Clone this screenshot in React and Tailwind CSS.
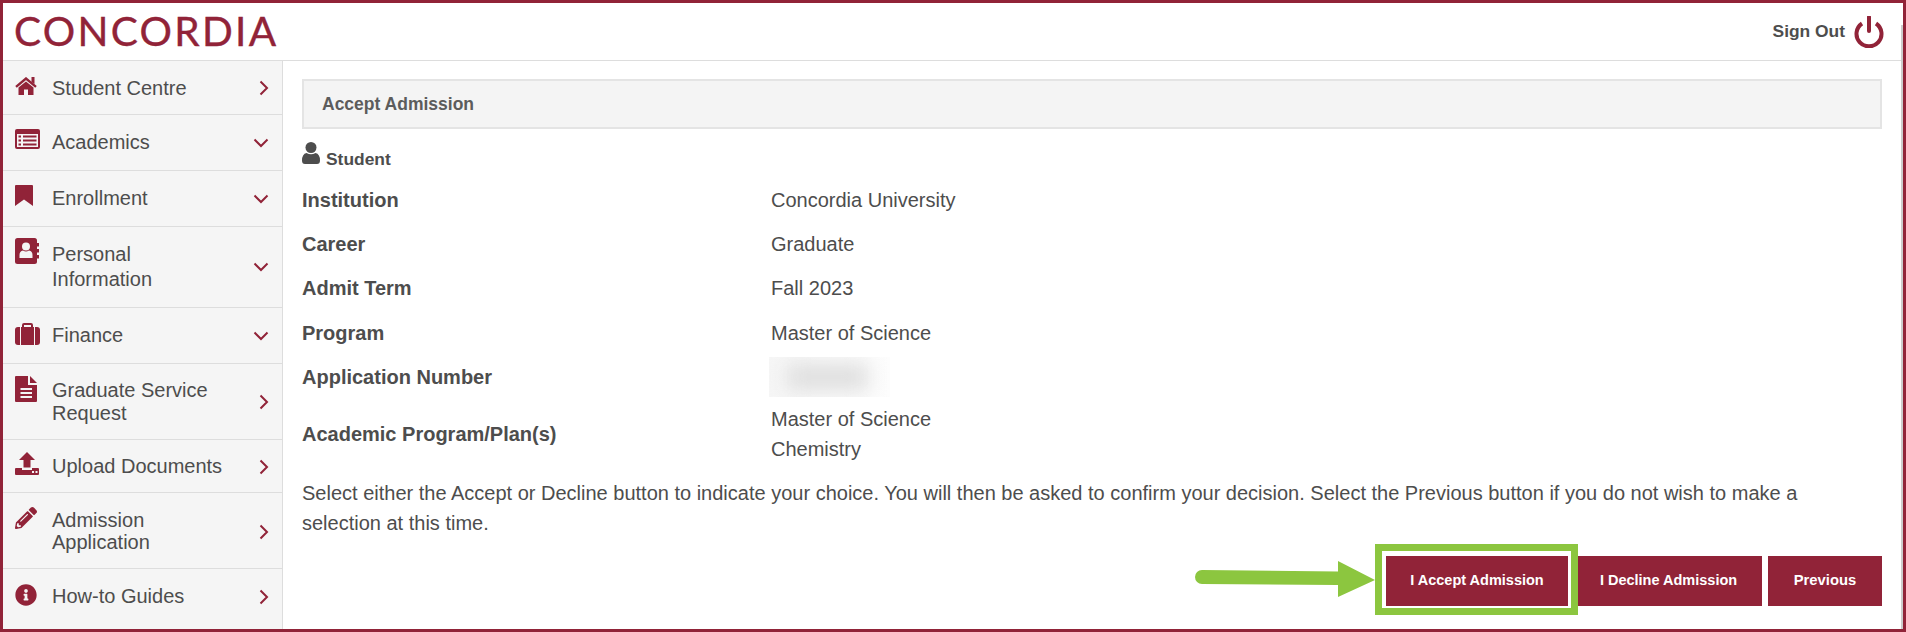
import React from "react";
import { FaPencilAlt, FaInfoCircle } from "react-icons/fa";

const M = "#912338";
const L = "#f5f5f5";

const Right = ({ cls }) => (
  <svg width="10" height="16" viewBox="0 0 10 16" className={`shrink-0 mr-[13px] ml-[6px] ${cls}`}>
    <polyline points="1.5,1.5 8,8 1.5,14.5" fill="none" stroke={M} strokeWidth="2" />
  </svg>
);
const Down = () => (
  <svg width="16" height="10" viewBox="0 0 16 10" className="shrink-0 mr-[13px]">
    <polyline points="1.5,1.5 8,8 14.5,1.5" fill="none" stroke={M} strokeWidth="2" />
  </svg>
);

const Home = () => (
  <svg width="22" height="18" viewBox="0 0 22 18">
    <path d="M16.5 0 H19.5 V7 L16.5 5 Z" fill={M} />
    <path d="M1 9.8 L11 1.5 L21 9.8" fill="none" stroke={M} strokeWidth="2.4" />
    <path d="M3.5 10.5 L11 4.6 L18.5 10.5 V18 H13 V12.5 H9 V18 H3.5 Z" fill={M} />
  </svg>
);
const ListAlt = () => (
  <svg width="25" height="20" viewBox="0 0 25 20">
    <rect width="25" height="20" rx="2" fill={M} />
    <rect x="2" y="5" width="21" height="13" fill={L} />
    <path d="M3.5 6.5 H6 V8.5 H3.5 Z M3.5 10.5 H6 V12.5 H3.5 Z M3.5 14.5 H6 V16.5 H3.5 Z M8 6.5 H21.5 V8.5 H8 Z M8 10.5 H21.5 V12.5 H8 Z M8 14.5 H21.5 V16.5 H8 Z" fill={M} />
  </svg>
);
const Bookmark = () => (
  <svg width="18" height="22" viewBox="0 0 18 22">
    <path d="M1 0 H17 A1 1 0 0 1 18 1 V21 L9 14.5 L0 21 V1 A1 1 0 0 1 1 0 Z" fill={M} />
  </svg>
);
const AddressBook = () => (
  <svg width="24" height="26" viewBox="0 0 24 26">
    <rect width="22" height="26" rx="2.5" fill={M} />
    <path d="M22 5 H24 V8.5 H22 Z M22 11 H24 V14.5 H22 Z M22 17 H24 V20.5 H22 Z" fill={M} />
    <circle cx="11" cy="8.5" r="4" fill={L} />
    <path d="M4.5 20 V17 Q4.5 13 8 12.5 Q11 14.5 14 12.5 Q17.5 13 17.5 17 V20 Z" fill={L} />
  </svg>
);
const Suitcase = () => (
  <svg width="25" height="22" viewBox="0 0 25 22">
    <path d="M8 5 V2 Q8 1 9 1 H16 Q17 1 17 2 V5" fill="none" stroke={M} strokeWidth="2" />
    <rect y="4" width="25" height="18" rx="3" fill={M} />
    <rect x="5" y="4" width="1" height="18" fill={L} />
    <rect x="19" y="4" width="1" height="18" fill={L} />
  </svg>
);
const FileText = () => (
  <svg width="22" height="26" viewBox="0 0 22 26">
    <path d="M1 0 H13 V9 H22 V25 A1 1 0 0 1 21 26 H1 A1 1 0 0 1 0 25 V1 A1 1 0 0 1 1 0 Z" fill={M} />
    <path d="M15 0 L22 7 H15 Z" fill={M} />
    <path d="M5.5 12 H17 V14 H5.5 Z M5.5 16 H17 V18 H5.5 Z M5.5 20 H17 V22 H5.5 Z" fill={L} />
  </svg>
);
const Upload = () => (
  <svg width="24" height="23" viewBox="0 0 24 23">
    <path d="M12 0 L20 8 H15.5 V15.5 H8.5 V8 H4 Z" fill={M} />
    <path d="M1 16 H7 V18 H17 V16 H23 Q24 16 24 17 V22 Q24 23 23 23 H1 Q0 23 0 22 V17 Q0 16 1 16 Z" fill={M} />
    <rect x="17" y="19" width="2" height="2" fill={L} />
    <rect x="20.5" y="19" width="2" height="2" fill={L} />
  </svg>
);
const User = () => (
  <svg width="18" height="22" viewBox="0 0 18 22" className="shrink-0">
    <circle cx="9" cy="5.5" r="5.5" fill="#4d4d4d" />
    <path d="M0 18.5 Q0 12 4.5 11 Q9 13.5 13.5 11 Q18 12 18 18.5 Q18 22 15 22 H3 Q0 22 0 18.5 Z" fill="#4d4d4d" />
  </svg>
);

const nav = [
  { icon: <Home />, top: "mt-[16px]", h: "h-[54px]", label: <>Student Centre</>, chev: "r" },
  { icon: <ListAlt />, top: "mt-[14px]", h: "h-[56px]", text: "pb-[2px]", label: <>Academics</>, chev: "d" },
  { icon: <Bookmark />, top: "mt-[14px]", h: "h-[56px]", text: "pb-[2px]", label: <>Enrollment</>, chev: "d" },
  { icon: <AddressBook />, top: "mt-[11px]", h: "h-[81px]", label: <span className="block leading-[25px]">Personal<br />Information</span>, chev: "d" },
  { icon: <Suitcase />, top: "mt-[15px]", h: "h-[56px]", text: "pb-[2px]", label: <>Finance</>, chev: "d" },
  { icon: <FileText />, top: "mt-[12px]", h: "h-[76px]", label: <span className="block leading-[23px]">Graduate Service<br />Request</span>, chev: "r" },
  { icon: <Upload />, top: "mt-[12px]", h: "h-[53px]", label: <>Upload Documents</>, chev: "r", chevCls: "mt-[2px]" },
  { icon: <FaPencilAlt className="w-[22px] h-[22px]" />, top: "mt-[14px]", h: "h-[76px]", label: <span className="block leading-[22px]">Admission<br />Application</span>, chev: "r", chevCls: "mt-[2px]" },
  { icon: <FaInfoCircle className="w-[22px] h-[22px]" />, top: "mt-[15px]", h: "h-[61px]", text: "pb-[8px]", label: <>How-to Guides</>, chev: "r", chevCls: "mb-[5px]", last: true },
];

const rows = [
  ["Institution", "Concordia University", "pt-[1px]"],
  ["Career", "Graduate", ""],
  ["Admit Term", "Fall 2023", ""],
  ["Program", "Master of Science", "pt-[1px]"],
];

export default function App() {
  return (
    <div className="relative w-[1906px] h-[632px] overflow-hidden border-[3px] border-[#912338] bg-white flex flex-col text-[#4d4d4d] font-['Liberation_Sans',Arial,sans-serif]">
      <header className="h-[58px] shrink-0 border-b border-[#dddddd] flex items-center justify-between pl-[11px] pr-[19px]">
        <span className="font-['Lato',sans-serif] text-[40.5px] leading-none tracking-[2.3px] text-[#912338] [-webkit-text-stroke:0.4px_#912338]">CONCORDIA</span>
        <div className="flex items-center gap-[9px]">
          <span className="font-bold text-[17.4px]">Sign Out</span>
          <svg width="30" height="32" viewBox="0 0 30 32">
            <path d="M8 7.5 A12.5 12.5 0 1 0 22 7.5" fill="none" stroke="#912338" strokeWidth="4" />
            <line x1="15" y1="1" x2="15" y2="15" stroke="#912338" strokeWidth="4" strokeLinecap="round" />
          </svg>
        </div>
      </header>
      <div className="flex flex-1 min-h-0">
        <nav className="w-[280px] shrink-0 bg-[#f5f5f5] border-r border-[#dddddd] text-[20px]">
          {nav.map((n, i) => (
            <div key={i} className={`flex pl-[12px] ${n.h} ${n.last ? "" : "border-b border-[#dddddd]"}`}>
              <div className={`w-[37px] shrink-0 text-[#912338] ${n.top}`}>{n.icon}</div>
              <div className={`flex-1 self-center ${n.text || ""}`}>{n.label}</div>
              <div className="self-center">{n.chev === "r" ? <Right cls={n.chevCls || ""} /> : <Down />}</div>
            </div>
          ))}
        </nav>
        <main className="flex-1 min-w-0 pl-[19px] pr-[21px] pt-[18px]">
          <div className="h-[50px] border-2 border-[#e4e4e4] bg-[#f4f4f4] flex items-center pl-[18px] font-bold text-[17.5px] text-[#5c5c5c]">Accept Admission</div>
          <div className="h-[48px] flex items-start pt-[13px] gap-[6px] font-bold text-[17.4px]">
            <User />
            <span className="mt-[4px]">Student</span>
          </div>
          {rows.map(([a, b, c]) => (
            <div key={a} className={`grid grid-cols-[469px_1fr] h-[44.4px] items-center text-[20px] ${c}`}>
              <div className="font-bold">{a}</div>
              <div>{b}</div>
            </div>
          ))}
          <div className="grid grid-cols-[467px_1fr] h-[44.4px] items-center text-[20px]">
            <div className="font-bold">Application Number</div>
            <div className="relative w-[121px] h-[40px] overflow-hidden bg-gradient-to-r from-[#f6f6f6] to-[#fdfdfd]">
              <div className="absolute left-[18px] right-[22px] top-[7px] bottom-[7px] bg-[#dedede] blur-[10px]" />
            </div>
          </div>
          <div className="grid grid-cols-[469px_1fr] h-[66px] pt-[5px] items-center text-[20px]">
            <div className="font-bold">Academic Program/Plan(s)</div>
            <div className="leading-[30px]">Master of Science<br />Chemistry</div>
          </div>
          <p className="mt-[13px] text-[20px] leading-[30px]">
            Select either the Accept or Decline button to indicate your choice. You will then be asked to confirm your decision. Select the Previous button if you do not wish to make a<br />selection at this time.
          </p>
          <div className="mt-[6px] flex justify-end items-start">
            <svg width="180" height="38" viewBox="0 0 180 38" className="mt-[17px]">
              <path d="M7 9 L143 10.5 L143 0 L180 19 L143 36 L143 24 L7 23 A7 7 0 0 1 7 9 Z" fill="#8cc63f" />
            </svg>
            <div className="border-[7px] border-[#8cc63f] bg-white pt-[5px] pl-[4px] pr-[3px] pb-[2px] h-[71px]">
              <button className="w-[182px] h-[50px] bg-[#912338] text-white font-bold text-[14.5px]">I Accept Admission</button>
            </div>
            <button className="w-[184px] h-[50px] mt-[12px] bg-[#912338] text-white font-bold text-[14.5px] pr-[3px]">I Decline Admission</button>
            <button className="w-[114px] h-[50px] mt-[12px] ml-[6px] bg-[#912338] text-white font-bold text-[14.8px] pb-[1px]">Previous</button>
          </div>
        </main>
      </div>
      <div className="absolute right-0 top-[22px] bottom-0 w-[2px] bg-[#cccccc]" />
    </div>
  );
}
